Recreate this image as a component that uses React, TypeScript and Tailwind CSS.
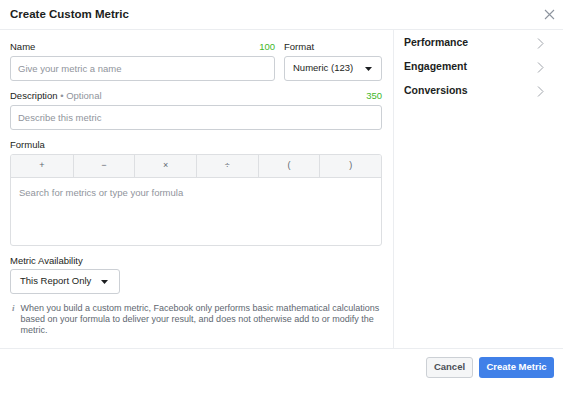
import { useState } from 'react';

const ops = ['+', '−', '×', '÷', '(', ')'];
const groups = ['Performance', 'Engagement', 'Conversions'];

function Caret() {
  return (
    <svg width="7" height="4" viewBox="0 0 7 4" className="shrink-0">
      <path d="M0 0h7L3.5 4z" fill="#1c1e21" />
    </svg>
  );
}

function Chevron() {
  return (
    <svg width="7" height="11" viewBox="0 0 7 11" fill="none">
      <path d="M1 0.5l5 5-5 5" stroke="#a0a4ab" strokeWidth="1" />
    </svg>
  );
}

export default function App() {
  const [name, setName] = useState('');
  const [desc, setDesc] = useState('');

  return (
    <div
      className="w-[563px] h-[393px] bg-white text-[#1c1e21] flex flex-col overflow-hidden"
      style={{ fontFamily: '"Liberation Sans", Arial, sans-serif' }}
    >
      {/* Header */}
      <div className="h-[30px] shrink-0 flex items-center justify-between pl-[10px] pr-[8px] border-b border-[#ebedf0]">
        <span className="text-[11.5px] font-bold">Create Custom Metric</span>
        <svg width="11" height="11" viewBox="0 0 11 11" fill="none">
          <path d="M1 1l9 9M10 1l-9 9" stroke="#8d949e" strokeWidth="1.1" />
        </svg>
      </div>

      {/* Body */}
      <div className="h-[319px] shrink-0 flex border-b border-[#ebedf0]">
        <div className="w-[394px] shrink-0 border-r border-[#ebedf0] pl-[10px] pr-[11px] flex flex-col">
          {/* Name + Format */}
          <div className="flex gap-[9px] mt-[11px]">
            <div className="flex-1 flex flex-col">
              <div className="h-[12px] flex items-center justify-between text-[9.5px] leading-[12px]">
                <span>Name</span>
                <span className="text-[#42b72a]">{100 - name.length}</span>
              </div>
              <input
                value={name}
                onChange={(e) => setName(e.target.value)}
                placeholder="Give your metric a name"
                className="mt-[3px] h-[25px] rounded-[3px] border border-[#ccd0d5] px-[7px] text-[9.5px] outline-none placeholder:text-[#90949c]"
              />
            </div>
            <div className="w-[98px] flex flex-col">
              <div className="h-[12px] text-[9.5px] leading-[12px]">Format</div>
              <button className="mt-[3px] h-[25px] rounded-[3px] border border-[#ccd0d5] pl-[8px] pr-[9px] flex items-center justify-between text-[9.5px]">
                <span>Numeric (123)</span>
                <Caret />
              </button>
            </div>
          </div>

          {/* Description */}
          <div className="mt-[9px] h-[12px] flex items-center justify-between text-[9.5px] leading-[12px]">
            <span>
              Description <span className="text-[#90949c]">• Optional</span>
            </span>
            <span className="text-[#42b72a]">{350 - desc.length}</span>
          </div>
          <input
            value={desc}
            onChange={(e) => setDesc(e.target.value)}
            placeholder="Describe this metric"
            className="mt-[3px] h-[25px] rounded-[3px] border border-[#ccd0d5] px-[7px] text-[9.5px] outline-none placeholder:text-[#90949c]"
          />

          {/* Formula */}
          <div className="mt-[9px] h-[12px] text-[9.5px] leading-[12px]">Formula</div>
          <div className="mt-[3px] h-[92px] rounded-[3px] border border-[#dddfe2] flex flex-col overflow-hidden">
            <div className="h-[23px] shrink-0 grid grid-cols-6 bg-[#f5f6f7] border-b border-[#dddfe2]">
              {ops.map((op, i) => (
                <button
                  key={op}
                  className={`flex items-center justify-center text-[9px] text-[#606770] ${i > 0 ? 'border-l border-[#dddfe2]' : ''}`}
                >
                  {op}
                </button>
              ))}
            </div>
            <textarea
              placeholder="Search for metrics or type your formula"
              className="flex-1 resize-none px-[8px] pt-[8px] text-[9.5px] outline-none placeholder:text-[#90949c]"
            />
          </div>

          {/* Availability */}
          <div className="mt-[9px] h-[12px] text-[9.5px] leading-[12px]">Metric Availability</div>
          <button className="mt-[2px] w-[110px] h-[25px] rounded-[3px] border border-[#ccd0d5] pl-[9px] pr-[11px] flex items-center justify-between text-[9.5px]">
            <span>This Report Only</span>
            <Caret />
          </button>

          <div className="mt-[9px] flex gap-[6px] text-[9px] leading-[11px] text-[#606770]">
            <span className="w-[6px] pl-[2px] italic font-bold text-[#8d949e]" style={{ fontFamily: '"Liberation Serif", serif' }}>
              i
            </span>
            <p>
              When you build a custom metric, Facebook only performs basic mathematical calculations based on your
              formula to deliver your result, and does not otherwise add to or modify the metric.
            </p>
          </div>
        </div>

        {/* Metric groups */}
        <div className="flex-1 flex flex-col pt-[1px] pl-[10px] pr-[19px]">
          {groups.map((g) => (
            <button key={g} className="h-[24px] flex items-center justify-between text-[10.5px] font-bold">
              <span>{g}</span>
              <Chevron />
            </button>
          ))}
        </div>
      </div>

      {/* Footer */}
      <div className="flex-1 flex justify-end items-start pt-[8px] pr-[9px] gap-[6px]">
        <button className="h-[21px] w-[47px] rounded-[3px] border border-[#ccd0d5] bg-[#f5f6f7] text-[9.5px] font-bold text-[#4b4f56]">
          Cancel
        </button>
        <button className="h-[21px] w-[75px] rounded-[3px] bg-[#4080e8] text-[9.5px] font-bold text-white">
          Create Metric
        </button>
      </div>
    </div>
  );
}
